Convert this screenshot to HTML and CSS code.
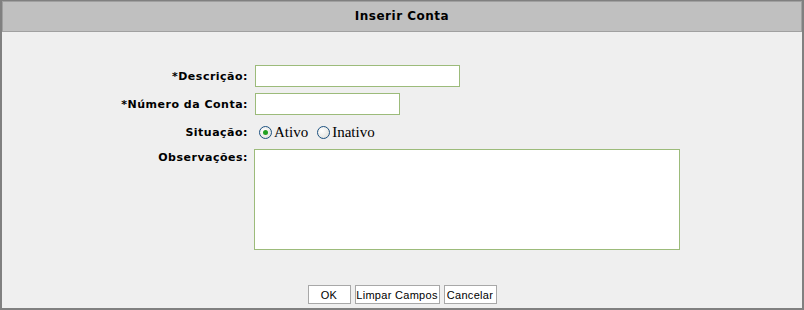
FILE: index.html
```html
<!DOCTYPE html>
<html lang="pt">
<head>
    <meta charset="UTF-8">
    <title>Inserir Conta</title>
    <link rel="stylesheet" href="styles.css">
</head>
<body>
    <div class="page">
        <div class="title-bar">Inserir Conta</div>

        <form class="form">
            <div class="form-grid">
                <label class="label" for="descricao">*Descrição:</label>
                <div><input type="text" id="descricao" class="field field-long" autofocus></div>

                <label class="label" for="numero">*Número da Conta:</label>
                <div><input type="text" id="numero" class="field field-short"></div>

                <span class="label">Situação:</span>
                <div class="radio-group">
                    <label class="radio"><input type="radio" name="situacao" checked>Ativo</label>
                    <label class="radio"><input type="radio" name="situacao">Inativo</label>
                </div>

                <label class="label label-top" for="obs">Observações:</label>
                <div><textarea id="obs" class="field field-area"></textarea></div>
            </div>

            <div class="actions">
                <button type="button" class="btn btn-ok">OK</button>
                <button type="reset" class="btn btn-clear">Limpar Campos</button>
                <button type="button" class="btn btn-cancel">Cancelar</button>
            </div>
        </form>
    </div>
</body>
</html>
```

FILE: styles.css
```css
:root {
    --frame-color: #808080;
    --header-bg: #c0c0c0;
    --header-border: #a0a0a0;
    --page-bg: #efefef;
    --field-border: #9cbb7a;
    --btn-border: #a8a8a8;
    --text-color: #000000;
}

* {
    margin: 0;
    padding: 0;
    box-sizing: border-box;
}

html, body {
    height: 100%;
}

body {
    background: #ffffff;
    color: var(--text-color);
    font-family: "DejaVu Sans", Verdana, sans-serif;
}

.page {
    height: 310px;
    background: var(--page-bg);
    border: 2px solid var(--frame-color);
    border-top-width: 1px;
    display: flex;
    flex-direction: column;
}

.title-bar {
    height: 31px;
    background: var(--header-bg);
    border: 1px solid var(--header-border);
    text-align: center;
    font-size: 12px;
    font-weight: bold;
    letter-spacing: 0.5px;
    line-height: 29px;
}

.form {
    flex: 1;
    display: flex;
    flex-direction: column;
    padding-top: 33px;
}

.form-grid {
    display: grid;
    grid-template-columns: 246px auto;
    column-gap: 7px;
    row-gap: 6px;
    align-items: center;
}

.label {
    text-align: right;
    font-size: 11px;
    font-weight: bold;
    letter-spacing: 0.5px;
}

.label-top {
    align-self: start;
    padding-top: 2px;
}

.field {
    display: block;
    border: 1px solid var(--field-border);
    background: #ffffff;
    font-family: inherit;
    font-size: 12px;
    padding: 2px 3px;
    outline: none;
    caret-color: #000000;
}

.field-long {
    width: 205px;
    height: 22px;
}

.field-short {
    width: 145px;
    height: 22px;
}

.field-area {
    width: 426px;
    height: 101px;
    resize: none;
    margin-left: -1px;
}

.radio-group {
    display: flex;
    align-items: center;
    gap: 9px;
    height: 22px;
    padding-left: 4px;
    font-family: "Liberation Serif", "Times New Roman", serif;
    font-size: 15px;
}

.radio {
    display: flex;
    align-items: center;
    gap: 2px;
}

.radio input {
    appearance: none;
    -webkit-appearance: none;
    width: 13px;
    height: 13px;
    border: 1px solid #1c5180;
    border-radius: 50%;
    background: radial-gradient(circle at 35% 35%, #ffffff, #dcdcd6);
    position: relative;
    margin: 0;
}

.radio input:checked::after {
    content: "";
    position: absolute;
    left: 3px;
    top: 3px;
    width: 5px;
    height: 5px;
    border-radius: 50%;
    background: #21a121;
}

.actions {
    margin-top: auto;
    margin-bottom: 4px;
    display: flex;
    justify-content: center;
    gap: 4px;
}

.btn {
    height: 19px;
    padding: 0;
    border: 1px solid var(--btn-border);
    background: #ffffff;
    font-family: "Liberation Sans", Tahoma, sans-serif;
    font-size: 11px;
    letter-spacing: 0.3px;
    white-space: nowrap;
    color: #000000;
}

.btn-ok {
    width: 43px;
}

.btn-clear {
    width: 85px;
}

.btn-cancel {
    width: 53px;
}
```
